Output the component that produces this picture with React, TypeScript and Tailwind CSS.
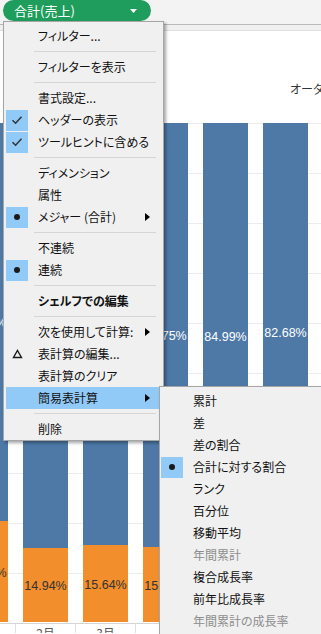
import React from "react";

type Icon = "check" | "dot" | "delta";

type MenuItem =
  | { sep: true }
  | {
      sep?: false;
      label: string;
      icon?: Icon;
      sub?: boolean;
      bold?: boolean;
      active?: boolean;
      disabled?: boolean;
    };

const mainItems: MenuItem[] = [
  { label: "フィルター..." },
  { sep: true },
  { label: "フィルターを表示" },
  { sep: true },
  { label: "書式設定..." },
  { label: "ヘッダーの表示", icon: "check" },
  { label: "ツールヒントに含める", icon: "check" },
  { sep: true },
  { label: "ディメンション" },
  { label: "属性" },
  { label: "メジャー (合計)", icon: "dot", sub: true },
  { sep: true },
  { label: "不連続" },
  { label: "連続", icon: "dot" },
  { sep: true },
  { label: "シェルフでの編集", bold: true },
  { sep: true },
  { label: "次を使用して計算:", sub: true },
  { label: "表計算の編集...", icon: "delta" },
  { label: "表計算のクリア" },
  { label: "簡易表計算", sub: true, active: true },
  { sep: true },
  { label: "削除" },
];

const quickItems: MenuItem[] = [
  { label: "累計" },
  { label: "差" },
  { label: "差の割合" },
  { label: "合計に対する割合", icon: "dot" },
  { label: "ランク" },
  { label: "百分位" },
  { label: "移動平均" },
  { label: "年間累計", disabled: true },
  { label: "複合成長率" },
  { label: "前年比成長率" },
  { label: "年間累計の成長率", disabled: true },
];

// bar x, orange top (svg coords), labels
const bars = [
  { x: -37, top: 490, low: "20.24%", high: "79.76%" },
  { x: 23, top: 517, low: "14.94%", high: "85.06%" },
  { x: 83, top: 514, low: "15.64%", high: "84.36%" },
  { x: 143, top: 516, low: "15.25%", high: "84.75%" },
  { x: 203, top: 517, low: "15.01%", high: "84.99%" },
  { x: 263, top: 509, low: "17.32%", high: "82.68%" },
];

const BAR_TOP = 92;
const BASE = 591;

function MenuIcon({ icon }: { icon?: Icon }) {
  if (icon === "check") {
    return (
      <svg width="12" height="10" viewBox="0 0 12 10">
        <path d="M1.5 5.2 L4.6 8.2 L10.5 1.8" fill="none" stroke="#333" strokeWidth="1.5" />
      </svg>
    );
  }
  if (icon === "dot") {
    return (
      <svg width="8" height="8" viewBox="0 0 8 8">
        <circle cx="4" cy="4" r="3" fill="#1a1a1a" />
      </svg>
    );
  }
  if (icon === "delta") {
    return (
      <svg width="11" height="10" viewBox="0 0 11 10">
        <path d="M5.5 1.5 L9.5 8.5 L1.5 8.5 Z" fill="none" stroke="#1a1a1a" strokeWidth="1.4" strokeLinejoin="miter" />
      </svg>
    );
  }
  return null;
}

function SubArrow() {
  return (
    <svg width="5" height="8" viewBox="0 0 5 8">
      <path d="M0 0 L5 4 L0 8 Z" fill="#000" />
    </svg>
  );
}

function MenuRows({ items, rowMargin, sepClass }: { items: MenuItem[]; rowMargin: string; sepClass: string }) {
  return (
    <>
      {items.map((item, i) => {
        if (item.sep) {
          return (
            <div key={i} className="flex h-[9px] items-center">
              <div className={`h-px flex-1 bg-[#d5d5d5] ${sepClass}`} />
            </div>
          );
        }
        const boxed = item.icon === "check" || item.icon === "dot";
        return (
          <div
            key={i}
            className={`flex h-[22px] items-center ${rowMargin} ${item.active ? "bg-[#91c9f7]" : ""}`}
          >
            <div
              className={`flex h-[21px] w-[22px] shrink-0 items-center justify-center ${
                boxed ? "bg-[#91c9f7]" : ""
              }`}
            >
              <MenuIcon icon={item.icon} />
            </div>
            <span
              className={`ml-[10px] whitespace-nowrap leading-none ${item.bold ? "font-bold" : ""} ${
                item.disabled ? "text-[#8d8d8d]" : "text-[#111]"
              }`}
            >
              {item.label}
            </span>
            {item.sub && (
              <span className="ml-auto mr-[11px] flex items-center">
                <SubArrow />
              </span>
            )}
          </div>
        );
      })}
    </>
  );
}

function Chart() {
  const grid = [0, 1, 2, 3, 4, 5, 6, 7, 8, 9].map((k) => BAR_TOP + 50 * k);
  return (
    <svg width="321" height="602" viewBox="0 0 321 602" className="block">
      {grid.map((y) => (
        <line key={y} x1="0" x2="321" y1={y + 0.5} y2={y + 0.5} stroke="#ececec" />
      ))}
      <text x="290" y="57" fontSize="12" fill="#333" dominantBaseline="central" fontFamily="'Noto Sans CJK JP', sans-serif">
        オーダー日
      </text>
      {bars.map((b) => (
        <g key={b.x}>
          <rect x={b.x} y={BAR_TOP} width="45" height={b.top - BAR_TOP} fill="#4e79a7" />
          <rect x={b.x} y={b.top} width="45" height={BASE - b.top} fill="#f28e2b" />
          <text
            x={b.x + 22.5}
            y={(BAR_TOP + b.top) / 2 + 1}
            fontSize="12.5"
            fill="#ffffff"
            textAnchor="middle"
            dominantBaseline="central"
            fontFamily="'Liberation Sans', Arial, sans-serif"
          >
            {b.high}
          </text>
          <text
            x={b.x + 22.5}
            y={(b.top + BASE) / 2 + 1}
            fontSize="12.5"
            fill="#333"
            textAnchor="middle"
            dominantBaseline="central"
            fontFamily="'Liberation Sans', Arial, sans-serif"
          >
            {b.low}
          </text>
        </g>
      ))}
      <line x1="0" x2="321" y1="592.5" y2="592.5" stroke="#d4d4d4" />
      {[15.5, 75.5, 135.5, 195.5, 255.5, 315.5].map((x) => (
        <line key={x} x1={x} x2={x} y1="593" y2="602" stroke="#e0e0e0" />
      ))}
      {[
        { x: 45.5, t: "2月" },
        { x: 105.5, t: "3月" },
      ].map((l) => (
        <text
          key={l.t}
          x={l.x}
          y="607"
          fontSize="12"
          fill="#555"
          textAnchor="middle"
          fontFamily="'Noto Sans CJK JP', sans-serif"
        >
          {l.t}
        </text>
      ))}
    </svg>
  );
}

export default function App() {
  return (
    <div className="relative h-[634px] w-[321px] overflow-hidden bg-white font-['Noto_Sans_CJK_JP',sans-serif] text-[12px] [font-feature-settings:'palt']">
      {/* shelf strip */}
      <div className="flex h-[24px] items-start bg-[#f3f3f3]">
        <div className="ml-[3px] flex h-[21px] w-[148px] items-center rounded-full bg-[#1f9d5c] pl-[11px] pr-[14px]">
          <span className="text-[13px] leading-none text-white">合計(売上)</span>
          <svg width="7" height="4" viewBox="0 0 7 4" className="ml-auto">
            <path d="M0 0 L7 0 L3.5 4 Z" fill="#fff" />
          </svg>
        </div>
      </div>

      {/* view panel */}
      <div className="border-t border-[#b9b9b9]">
        <div className="h-[6px] border-b border-[#dedede] bg-[#f0f0f0]" />
        <Chart />
      </div>

      {/* context menu */}
      <div className="absolute left-[3px] top-[21px] flex w-[161px] flex-col border border-[#a6a6a6] bg-[#f0f0f0] pt-[3px] shadow-[2px_2px_3px_rgba(0,0,0,0.35)]">
        <MenuRows items={mainItems} rowMargin="mx-[2px]" sepClass="ml-[30px] mr-[7px]" />
      </div>

      {/* quick table calc submenu */}
      <div className="absolute left-[159px] top-[386px] flex h-[260px] w-[180px] flex-col border border-[#a6a6a6] bg-[#f0f0f0] pt-[3px] shadow-[2px_2px_3px_rgba(0,0,0,0.35)]">
        <MenuRows items={quickItems} rowMargin="ml-[1px]" sepClass="ml-[30px]" />
      </div>
    </div>
  );
}
